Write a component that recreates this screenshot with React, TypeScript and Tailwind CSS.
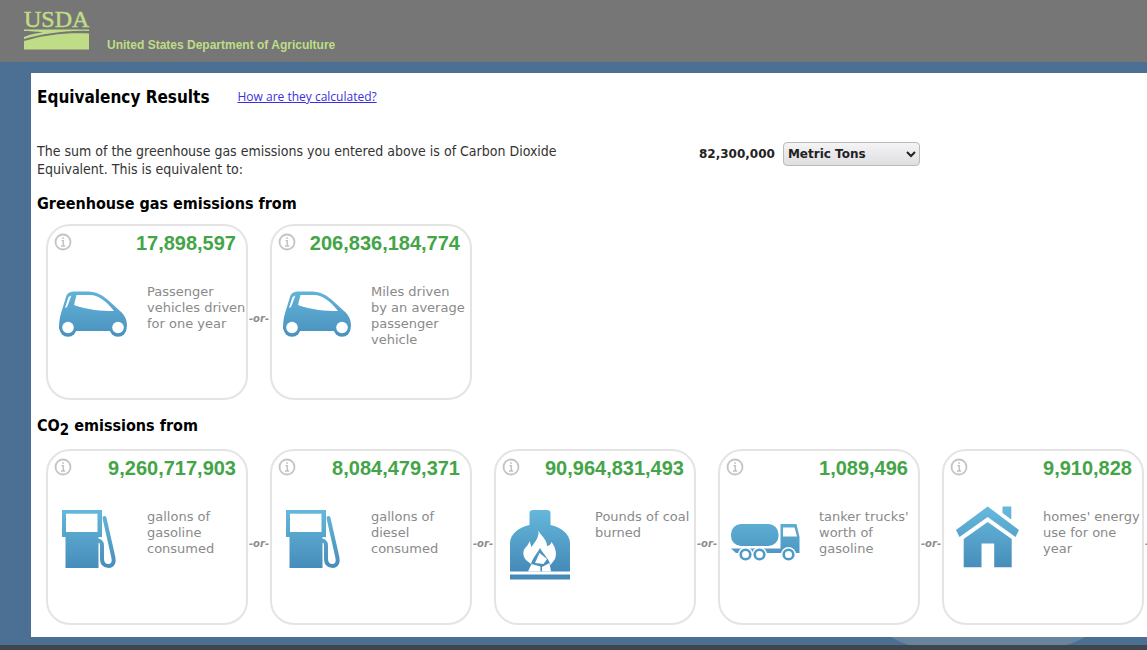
import React, { useState } from 'react';

type IconName = 'car' | 'pump' | 'fireplace' | 'truck' | 'house';

interface Equivalency {
  value: string;
  label: string;
  icon: IconName;
}

const greenhouse: Equivalency[] = [
  { value: '17,898,597', label: 'Passenger vehicles driven for one year', icon: 'car' },
  { value: '206,836,184,774', label: 'Miles driven by\u00a0an average passenger vehicle', icon: 'car' },
];

const co2: Equivalency[] = [
  { value: '9,260,717,903', label: 'gallons of gasoline consumed', icon: 'pump' },
  { value: '8,084,479,371', label: 'gallons of diesel consumed', icon: 'pump' },
  { value: '90,964,831,493', label: 'Pounds of coal burned', icon: 'fireplace' },
  { value: '1,089,496', label: "tanker trucks' worth of gasoline", icon: 'truck' },
  { value: '9,910,828', label: "homes' energy use for one year", icon: 'house' },
];

const shapes: Record<IconName, React.ReactNode> = {
  car: (
    <>
      <path d="M1 49C1 41 2 36 4 30L8 17C9 13 12 11.500 17 11.500H30C38 11.500 44 15 50 20L62 31C67 35 69 40 69 46L66 51H5Z" />
      <circle cx="10" cy="48" r="8.700" />
      <circle cx="60" cy="48" r="8.700" />
      <g fill="white">
        <path d="M18.500 15H32C41 15 49 22 56 31C44 31 29 30 16 25Z" />
        <path d="M10.500 17L13.500 15.500L9 27L7 28Z" />
        <circle cx="10" cy="47.500" r="5.800" />
        <circle cx="60" cy="47.500" r="5.800" />
      </g>
    </>
  ),
  pump: (
    <>
      <path d="M4 5H44V32H40.500V63H7.500V32H4Z" />
      <path d="M8 8.700H39.500V27H8Z" fill="white" />
      <path d="M46.500 13L55.500 53C56.500 58 54 61 50.500 61C46 61 44 58 44 54V41C44 37 42.500 35.500 39 35.500" fill="none" stroke="url(#sky)" strokeWidth="4" strokeLinecap="round" />
    </>
  ),
  fireplace: (
    <>
      <path d="M23.500 8C23.500 6 25 5 27 5H41C43 5 44.500 6 44.500 8V20C55 22 64 29 64 38V66.500H4V38C4 29 13 22 23.500 20Z" />
      <path d="M4 69.500H64V74.500H4Z" />
      <g fill="white">
        <path d="M32.500 25.500C34 30 41 34 41 41C43 41 45 39 45.500 37C50 43 51 49 49 54L44.500 60C43 54 38 50 34 43C31 49 27 52 25 59L20 55C16 50 17 45 20 42C22 40 23 38 23.500 36L25.500 42C29 37 33 33 32.500 25.500Z" />
        <path d="M33.500 48L41 54L37.500 59L29 58Z" />
        <path d="M25.500 59L34.500 61.500V66.500H22Z" />
        <path d="M36 62L43.500 58L45 66.500H36Z" />
      </g>
    </>
  ),
  truck: (
    <>
      <rect x="1" y="19" width="47.500" height="22" rx="10" />
      <path d="M1 43.500H50.500V19H66.500L69.500 32V48H6Z" />
      <path d="M53 22.500H64.500L67 31.500H53Z" fill="white" />
      {[15.5, 29.5, 58.5].map((cx) => (
        <g key={cx}>
          <circle cx={cx} cy="49.500" r="7.500" fill="white" />
          <circle cx={cx} cy="49.500" r="4.800" fill="none" stroke="#4d9bc6" strokeWidth="2.600" />
        </g>
      ))}
    </>
  ),
  house: (
    <>
      <path d="M33.700 1.500L65 25L61.500 32L33.700 12L5.500 32L2 25Z" />
      <path d="M48.500 1.500H57.300V14.500L48.500 8Z" />
      <path d="M33.700 17L57.700 34V62.300H40.200V38.500H27.500V62.300H9.700V34Z" />
    </>
  ),
};

const PictureIcon = ({ name }: { name: IconName }) => (
  <svg viewBox="0 0 72 76" className="h-[76px] w-[72px] shrink-0" fill="url(#sky)" aria-hidden="true">
    <defs>
      <linearGradient id="sky" gradientUnits="userSpaceOnUse" x1="0" y1="4" x2="0" y2="68">
        <stop offset="0" stopColor="#65b8db" />
        <stop offset="1" stopColor="#4489b8" />
      </linearGradient>
    </defs>
    {shapes[name]}
  </svg>
);

const InfoButton = () => (
  <button type="button" aria-label="More information" className="-ml-1 size-[18px]">
    <svg viewBox="0 0 18 18" fill="none" stroke="#c4c4c4" strokeWidth="1.800" className="size-[18px]">
      <circle cx="9" cy="9" r="7.500" />
      <path d="M7.500 7.800H9.300V13M7 13H11.300M9 4.300V6" strokeWidth="1.500" />
    </svg>
  </button>
);

const Card = ({ item }: { item: Equivalency }) => (
  <article className="h-44 w-[202px] shrink-0 rounded-[24px] border-2 border-[#e4e4e4] px-[10px] pt-[7px]">
    <div className="flex h-[47px] items-start justify-between">
      <InfoButton />
      <strong className="font-['Liberation_Sans',sans-serif] text-[20px] leading-5 text-[#43a547]">{item.value}</strong>
    </div>
    <div className="flex gap-[17px]">
      <PictureIcon name={item.icon} />
      <p className="-mr-[10px] pt-1 font-['DejaVu_Sans',sans-serif] text-[13px] leading-4 text-[#8a8a8a]">{item.label}</p>
    </div>
  </article>
);

const Or = () => (
  <span className="w-[22px] shrink-0 pt-[14px] text-center font-['DejaVu_Sans',sans-serif] text-[10px] font-bold italic leading-4 text-[#8c8c8c]">
    -or-
  </span>
);

const CardRow = ({ items, more = false }: { items: Equivalency[]; more?: boolean }) => (
  <div className="ml-[9px] flex items-center overflow-hidden">
    {items.map((item, i) => (
      <React.Fragment key={item.value}>
        {i > 0 && <Or />}
        <Card item={item} />
      </React.Fragment>
    ))}
    {more && <Or />}
  </div>
);

const UsdaLogo = () => (
  <svg viewBox="0 0 68 40" className="h-10 w-[68px] overflow-visible" fill="#bfdd86" role="img" aria-label="USDA">
    <text x="1" y="17" fontFamily="'Liberation Serif', serif" fontSize="24" stroke="#bfdd86" strokeWidth="0.500">USDA</text>
    <path d="M1 19.500H66V21C42 20 20 24 1 29V27C8 24 15 23 20 22.500C14 21.500 6 21 1 21Z" />
    <path d="M1 31C22 25 42 22.500 66 23.500V39.500H1Z" />
  </svg>
);

const App: React.FC = () => {
  const [unit, setUnit] = useState('Metric Tons');

  return (
    <div className="flex min-h-screen flex-col bg-[#4c7093] font-['DejaVu_Sans_Condensed','Open_Sans',sans-serif] text-black">
      <header className="flex h-[62px] items-start gap-4 bg-[#767676] pl-[23px] pt-[10px]">
        <UsdaLogo />
        <p className="pt-[27px] font-['Liberation_Sans',sans-serif] text-[12px] font-bold leading-4 text-[#bfdd86]">
          United States Department of Agriculture
        </p>
      </header>

      <main className="ml-[31px] mt-[11px] overflow-hidden bg-white pb-3 pl-[6px] pt-3">
        <div className="flex items-center gap-7">
          <h1 className="text-[17px] font-bold leading-6">Equivalency Results</h1>
          <a href="#calculated" className="font-['Open_Sans',sans-serif] text-[12px] leading-6 text-[#3a2fe0] underline">
            How are they calculated?
          </a>
        </div>

        <div className="mt-[33px] flex items-start">
          <p className="w-[662px] pr-24 text-[14px] leading-[18px] text-[#333]">
            The sum of the greenhouse gas emissions you entered above is of Carbon Dioxide Equivalent. This is equivalent to:
          </p>
          <label className="flex items-center gap-2 font-['DejaVu_Sans',sans-serif] text-[12px] font-bold text-[#222]">
            82,300,000
            <select
              value={unit}
              onChange={(e) => setUnit(e.target.value)}
              className="h-6 w-[137px] rounded border border-[#bbb] bg-[#e9e9ea] bg-linear-to-b from-[#f4f4f5] to-[#dfdfe2] font-bold"
            >
              <option>Metric Tons</option>
              <option>Short Tons</option>
            </select>
          </label>
        </div>

        <h2 className="mb-2 mt-[14px] text-[16px] font-bold leading-6">Greenhouse gas emissions from</h2>
        <CardRow items={greenhouse} />

        <h2 className="mb-[11px] mt-[14px] text-[16px] font-bold leading-6">
          CO<sub className="text-[15px]">2</sub> emissions from
        </h2>
        <CardRow items={co2} more />
      </main>

      <div className="flex h-2 justify-end pr-[62px]">
        <svg viewBox="0 0 194 8" className="h-2 w-[194px]" fill="#68859f" aria-hidden="true">
          <path d="M0 0H194Q186 5 175 8H18Q8 5 0 0Z" />
        </svg>
      </div>
      <footer className="h-[5px] bg-[#40464c]" />
    </div>
  );
};

export default App;
